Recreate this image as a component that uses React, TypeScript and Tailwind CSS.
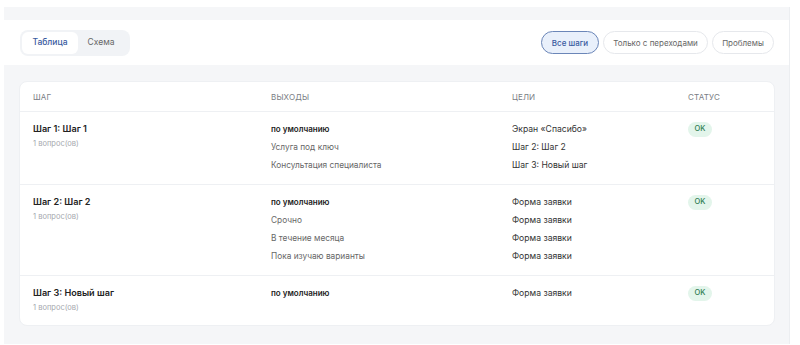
import React from "react";

const rows = [
  {
    name: "Шаг 1: Шаг 1",
    outs: ["по умолчанию", "Услуга под ключ", "Консультация специалиста"],
    goals: ["Экран «Спасибо»", "Шаг 2: Шаг 2", "Шаг 3: Новый шаг"],
  },
  {
    name: "Шаг 2: Шаг 2",
    outs: ["по умолчанию", "Срочно", "В течение месяца", "Пока изучаю варианты"],
    goals: ["Форма заявки", "Форма заявки", "Форма заявки", "Форма заявки"],
  },
  {
    name: "Шаг 3: Новый шаг",
    outs: ["по умолчанию"],
    goals: ["Форма заявки"],
  },
];

export default function App() {
  return (
    <div className="w-[800px] h-[345px] bg-white overflow-hidden font-['Inter','Noto_Sans',sans-serif]">
      <div className="ml-[4px] mt-[7px] w-[786px] h-[337px] bg-[#f5f6f8] border-r border-[#eceef1] flex flex-col">
        <div className="mt-[13px] h-[45px] bg-white flex items-center justify-between pl-[16px] pr-[15px]">
          <div className="flex items-center h-[26px] w-[110px] rounded-[8px] bg-[#f1f3f6] p-[2px]">
            <div className="h-[22px] w-[56px] rounded-[6px] bg-white flex items-center justify-center text-[8.5px] text-[#3a5ba0] font-medium">
              Таблица
            </div>
            <div className="flex-1 flex items-center justify-center text-[8.5px] text-[#666] pr-[4px]">
              Схема
            </div>
          </div>
          <div className="flex items-center gap-[4px]">
            <div className="h-[23px] w-[58px] justify-center rounded-full border border-[#6b86b8] bg-[#e9f0fb] flex items-center text-[8px] font-medium text-[#3a5ba0]">
              Все шаги
            </div>
            <div className="h-[23px] w-[105px] justify-center rounded-full border border-[#e6e8ec] bg-white flex items-center text-[8px] text-[#666]">
              Только с переходами
            </div>
            <div className="h-[23px] w-[62px] justify-center rounded-full border border-[#e6e8ec] bg-white flex items-center text-[8px] text-[#666]">
              Проблемы
            </div>
          </div>
        </div>
        <div className="mt-[16px] ml-[15px] w-[756px] rounded-[8px] bg-white border border-[#eef0f3] overflow-hidden">
          <div className="grid grid-cols-[238px_241px_176px_1fr] px-[13px] h-[30px] items-center border-b border-[#eef0f3] text-[8px] text-[#7a7d84] tracking-[0.02em]">
            <div>ШАГ</div>
            <div>ВЫХОДЫ</div>
            <div>ЦЕЛИ</div>
            <div>СТАТУС</div>
          </div>
          {rows.map((r, i) => (
            <div
              key={i}
              className={`grid grid-cols-[238px_241px_176px_1fr] px-[13px] pt-[8px] pb-[10px] ${i < rows.length - 1 ? "border-b border-[#eef0f3]" : ""}`}
            >
              <div className="flex flex-col">
                <div className="text-[9.1px] font-semibold text-[#222] leading-[17px]">{r.name}</div>
                <div className="text-[7.5px] text-[#a5a8ae] leading-[14px]">1 вопрос(ов)</div>
              </div>
              <div className="flex flex-col">
                {r.outs.map((o, j) => (
                  <div
                    key={j}
                    className={`leading-[18px] ${j === 0 ? "text-[8px] font-semibold text-[#222]" : "text-[8.3px] text-[#666]"}`}
                  >
                    {o}
                  </div>
                ))}
              </div>
              <div className="flex flex-col">
                {r.goals.map((g, j) => (
                  <div key={j} className="leading-[18px] text-[8.6px] text-[#333]">
                    {g}
                  </div>
                ))}
              </div>
              <div className="flex items-start pt-[1.5px]">
                <span className="flex items-center justify-center h-[15px] w-[24px] rounded-full bg-[#e3f5eb] text-[7.5px] font-medium text-[#2e7d52]">
                  OK
                </span>
              </div>
            </div>
          ))}
        </div>
      </div>
    </div>
  );
}
